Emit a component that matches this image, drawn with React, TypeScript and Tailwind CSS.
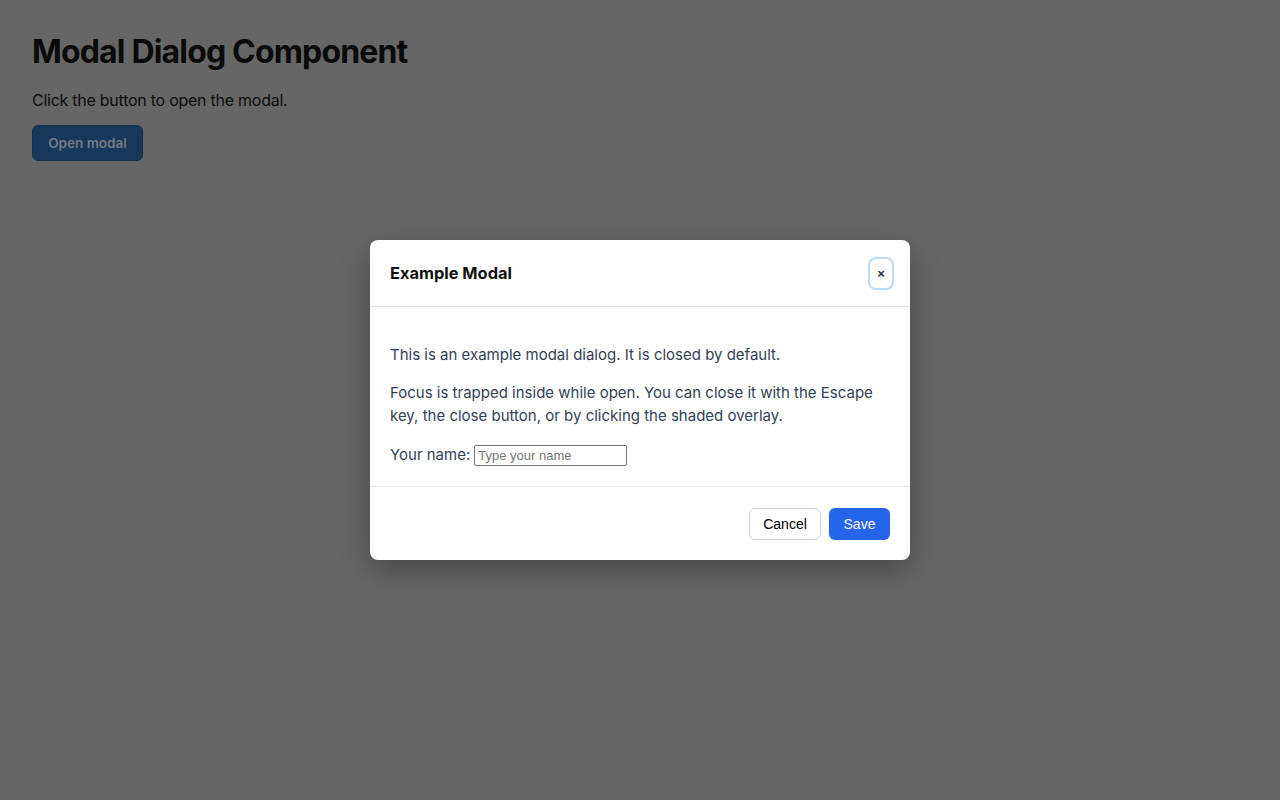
import { useState } from "react";

const App = () => {
  const [name, setName] = useState("");

  return (
    <div className="relative min-h-[800px] w-full bg-[#666666] font-['Inter',sans-serif]">
      <div className="p-8">
        <h1 className="text-[32px] font-bold leading-10 text-[#0a0a0a] tracking-[-0.026em]">Modal Dialog Component</h1>
        <p className="mt-4 text-base leading-6 tracking-[-0.016em] text-[#0d0d0d]">Click the button to open the modal.</p>
        <button className="mt-[13px] h-9 w-[111px] rounded-md border border-[#123050] bg-[#17375b] text-[13.5px] font-semibold text-[#777b80]">
          Open modal
        </button>
      </div>

      {/* overlay layer holding the dialog */}
      <div className="absolute inset-0 flex items-center justify-center">
        <div className="w-[540px] overflow-hidden rounded-lg bg-white shadow-[0_10px_30px_rgba(0,0,0,0.3)]">
          <div className="flex h-[67px] items-center justify-between border-b border-[#e5e7eb] pl-5 pr-4">
            <h2 className="text-[16.4px] font-bold text-[#111111]">Example Modal</h2>
            <button className="flex h-[33px] w-[26px] items-center justify-center rounded-lg border-2 border-[#bcdcf6] font-['Liberation_Sans',Arial,sans-serif] text-[13px] font-bold leading-none text-[#333]">
              ×
            </button>
          </div>
          <div className="p-5 text-[15px] leading-[23px] text-[#334155]">
            <p className="mt-4">This is an example modal dialog. It is closed by default.</p>
            <p className="mt-[15px]">
              Focus is trapped inside while open. You can close it with the Escape key, the close button, or by
              clicking the shaded overlay.
            </p>
            <div className="mt-[15px] flex h-6 items-center">
              <label htmlFor="name">Your name:</label>
              <input
                id="name"
                value={name}
                onChange={(e) => setName(e.target.value)}
                placeholder="Type your name"
                className="ml-1 mt-[2px] h-[21px] w-[153px] rounded-[2px] border border-[#767676] px-[3px] font-['Liberation_Sans',Arial,sans-serif] text-[13px] text-black placeholder:text-[#757575]"
              />
            </div>
          </div>
          <div className="flex justify-end gap-2 border-t border-[#e5e7eb] px-5 pt-[21px] pb-5 font-['Liberation_Sans',Arial,sans-serif] text-sm">
            <button className="h-8 w-[72px] rounded-md border border-[#d1d5db] bg-white text-black">Cancel</button>
            <button className="h-8 w-[61px] rounded-md bg-[#2563eb] text-white">Save</button>
          </div>
        </div>
      </div>
    </div>
  );
};

export default App;
